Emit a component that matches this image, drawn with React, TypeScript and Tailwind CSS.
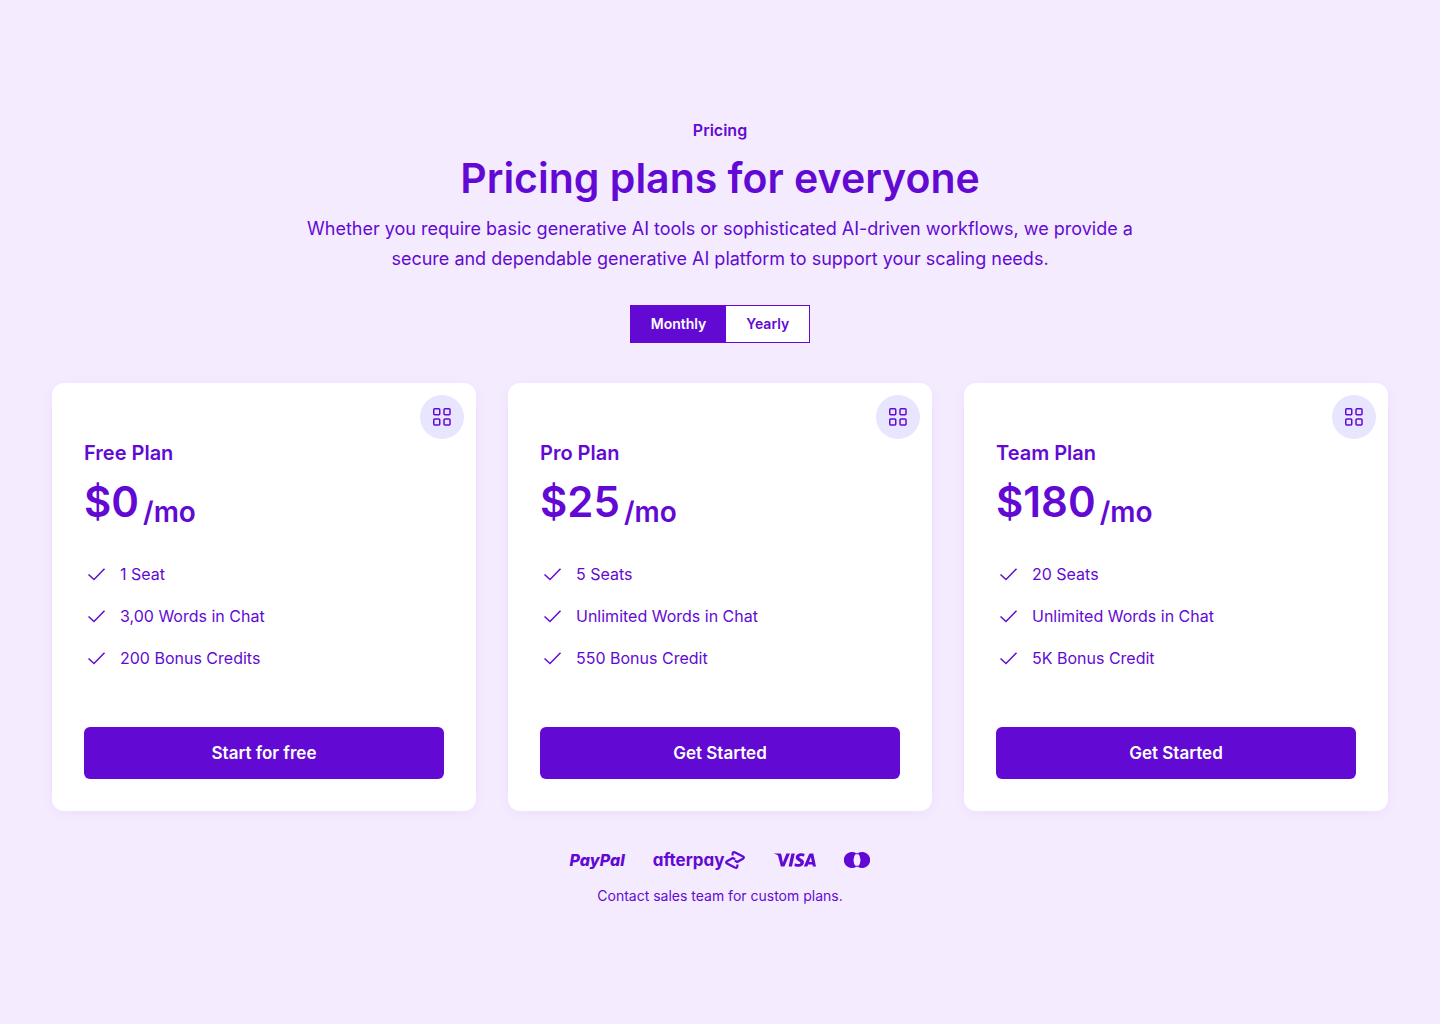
import { useState } from "react";
import { SiVisa } from "react-icons/si";

const plans = [
  {
    name: "Free Plan",
    price: "$0",
    features: ["1 Seat", "3,00 Words in Chat", "200 Bonus Credits"],
    action: "Start for free",
  },
  {
    name: "Pro Plan",
    price: "$25",
    features: ["5 Seats", "Unlimited Words in Chat", "550 Bonus Credit"],
    action: "Get Started",
  },
  {
    name: "Team Plan",
    price: "$180",
    features: ["20 Seats", "Unlimited Words in Chat", "5K Bonus Credit"],
    action: "Get Started",
  },
];

type Plan = (typeof plans)[number];

function GridIcon() {
  return (
    <svg viewBox="0 0 24 24" className="size-6" fill="none" stroke="currentColor" strokeWidth="1.5" aria-hidden="true">
      <rect x="3.75" y="3.75" width="6" height="6" rx="1" />
      <rect x="14" y="3.75" width="6" height="6" rx="1" />
      <rect x="3.75" y="14" width="6" height="6" rx="1" />
      <rect x="14" y="14" width="6" height="6" rx="1" />
    </svg>
  );
}

function CheckIcon() {
  return (
    <svg viewBox="0 0 24 24" className="size-6 shrink-0" fill="none" stroke="currentColor" strokeWidth="1.5" aria-hidden="true">
      <path d="M4.5 12.5 10 17.5 20.5 6.8" />
    </svg>
  );
}

function AfterpayLoop() {
  return (
    <svg
      viewBox="0 0 22 20"
      className="h-5 w-[22px]"
      fill="none"
      stroke="currentColor"
      strokeWidth="2.2"
      strokeLinejoin="round"
      aria-hidden="true"
    >
      <path d="M8.6 5.6V4Q8.8 1.4 11.2 2.5L19 6.5Q20.8 7.6 19 8.7L13.2 12 10.8 10.6" />
      <path d="M13.4 14.4V16Q13.2 18.6 10.8 17.5L3 13.5Q1.2 12.4 3 11.3L8.8 8 11.2 9.4" />
    </svg>
  );
}

function MastercardIcon() {
  return (
    <svg viewBox="0 0 26 16" className="h-4 w-[26px]" fill="currentColor" role="img" aria-label="Mastercard">
      <path d="M12.2 1.3a8 8 0 1 0 0 13.4 9.6 9.6 0 0 1 0-13.4Z" />
      <path d="M13.8 1.3a8 8 0 1 1 0 13.4 9.6 9.6 0 0 0 0-13.4Z" />
      <path d="M11.6 1.2h2.8v1h-2.8zM11.6 13.8h2.8v1h-2.8z" />
    </svg>
  );
}

function PlanCard({ plan }: { plan: Plan }) {
  return (
    <article className="relative flex flex-col rounded-xl bg-white px-8 pt-14 pb-8 shadow-[0_2px_12px_rgba(98,10,212,0.06)]">
      <div className="absolute top-3 right-3 flex size-11 items-center justify-center rounded-full bg-[#e8e5ff]">
        <GridIcon />
      </div>
      <h2 className="text-xl leading-7 font-semibold">{plan.name}</h2>
      <p className="mt-[7px] flex items-end gap-1 font-semibold">
        <span className="text-[42px] leading-14">{plan.price}</span>
        <span className="text-[28px] leading-9">/mo</span>
      </p>
      <ul className="mt-8 mb-[57px] flex flex-col gap-[18px]">
        {plan.features.map((feature) => (
          <li key={feature} className="flex items-center gap-3 text-base leading-6">
            <CheckIcon />
            {feature}
          </li>
        ))}
      </ul>
      <button type="button" className="mt-auto h-13 rounded-md bg-[#620ad4] pt-0.5 text-[17px] font-semibold text-white">
        {plan.action}
      </button>
    </article>
  );
}

export default function App() {
  const [period, setPeriod] = useState("Monthly");

  return (
    <main className="flex min-h-screen flex-col justify-center bg-[#f5ebff] px-13 py-8 font-['Inter',sans-serif] text-[#620ad4]">
      <header className="flex flex-col items-center text-center">
        <p className="text-base leading-6 font-semibold">Pricing</p>
        <h1 className="mt-2 text-[41px] leading-14 font-semibold">Pricing plans for everyone</h1>
        <p className="mt-2 max-w-[860px] text-lg leading-[30px]">
          Whether you require basic generative AI tools or sophisticated AI-driven workflows, we provide a secure and
          dependable generative AI platform to support your scaling needs.
        </p>
        <div className="mt-[31px] flex border border-[#620ad4] bg-white">
          {["Monthly", "Yearly"].map((label) => (
            <button
              key={label}
              type="button"
              aria-pressed={period === label}
              onClick={() => setPeriod(label)}
              className={
                period === label
                  ? "h-9 bg-[#620ad4] px-5 text-sm font-semibold text-white"
                  : "h-9 px-5 text-sm font-semibold"
              }
            >
              {label}
            </button>
          ))}
        </div>
      </header>

      <section className="mt-10 grid grid-cols-3 gap-8" aria-label="Plans">
        {plans.map((plan) => (
          <PlanCard key={plan.name} plan={plan} />
        ))}
      </section>

      <footer className="mt-[37px] flex flex-col items-center">
        <div className="flex h-6 items-center gap-7">
          <span className="text-base leading-6 font-extrabold italic [font-feature-settings:'cv11']">PayPal</span>
          <span className="flex items-center text-[17px] leading-6 font-bold [font-feature-settings:'cv11']">
            afterpay
            <AfterpayLoop />
          </span>
          <SiVisa className="size-[42px]" role="img" aria-label="Visa" />
          <MastercardIcon />
        </div>
        <p className="mt-3.5 text-sm leading-5">Contact sales team for custom plans.</p>
      </footer>
    </main>
  );
}
